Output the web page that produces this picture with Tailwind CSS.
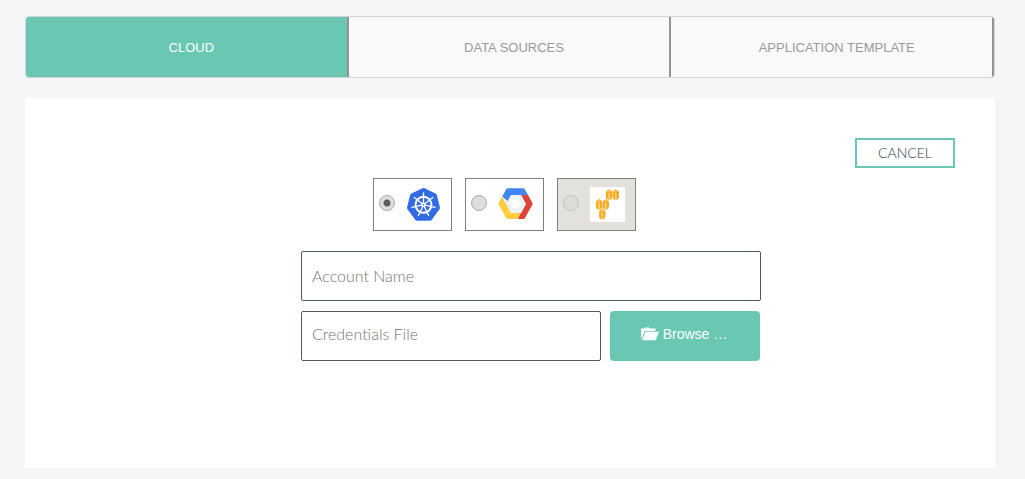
<!DOCTYPE html>
<html lang="en">
<head>
<meta charset="utf-8">
<meta name="viewport" content="width=device-width, initial-scale=1">
<title>Cloud accounts</title>
<script src="https://cdn.jsdelivr.net/npm/@tailwindcss/browser@4"></script>
</head>
<body class="min-h-screen bg-[#f4f6f8] pt-4 pr-[30px] pb-[11px] pl-[25px] font-['Liberation_Sans',Arial,sans-serif]">
<nav class="mb-5 flex overflow-hidden rounded border border-[#d3d3d3] bg-[#f9f9f9] text-[13px] text-[#999]">
  <button type="button" class="h-15 flex-1 border-r-2 border-[#999191] bg-[#69c7b4] pt-0.5 pl-[10px] text-white">CLOUD</button>
  <button type="button" class="h-15 flex-1 border-r-2 border-[#999191] pt-0.5 pl-[10px]">DATA SOURCES</button>
  <button type="button" class="h-15 flex-1 border-r-2 border-[#999191] pt-0.5 pl-[10px]">APPLICATION TEMPLATE</button>
</nav>
<main class="min-h-[370px] bg-white px-10 pt-10 pb-[107px]">
  <div class="mb-[10px] flex justify-end">
    <button type="button" class="h-[30px] w-[100px] border-2 border-[#69c7b4] font-['Lato',sans-serif] text-sm font-light text-[#2c3e50]">CANCEL</button>
  </div>
  <form>
    <div class="mb-5 flex justify-center gap-[13px] pr-[11px]">
      <label class="flex h-[53px] w-[79px] items-center gap-[11px] border border-[#808080] pl-[5px]">
        <input type="radio" name="provider" checked aria-label="Kubernetes" class="mb-[3px] size-4 shrink-0 appearance-none rounded-full border border-[#a9a9a9] bg-[radial-gradient(circle,#5e5e5e_3px,#dedede_4px)]">
        <svg class="size-[35px] shrink-0" viewBox="0 0 35 35" aria-hidden="true">
          <path d="M16.400 1.300q1.100-.5 2.200 0l10.900 5.300q1.200.6 1.500 1.900l2.900 11.800q.2 1.200-.6 2.200l-7.500 10.200q-.8 1-2.100 1H11.300q-1.300 0-2.100-1L1.700 22.500q-.8-1-.6-2.200L4 8.500q.3-1.300 1.500-1.900z" fill="#326ce5"/>
          <g fill="none" stroke="#fff" stroke-linecap="round">
            <circle cx="17.500" cy="17.800" r="8" stroke-width="2"/>
            <g stroke-width="1.300">
              <path id="spoke" d="M17.500 16V6"/>
              <use href="#spoke" transform="rotate(51.430 17.500 17.800)"/>
              <use href="#spoke" transform="rotate(102.860 17.500 17.800)"/>
              <use href="#spoke" transform="rotate(154.290 17.500 17.800)"/>
              <use href="#spoke" transform="rotate(205.710 17.500 17.800)"/>
              <use href="#spoke" transform="rotate(257.140 17.500 17.800)"/>
              <use href="#spoke" transform="rotate(308.570 17.500 17.800)"/>
            </g>
          </g>
          <circle cx="17.500" cy="17.800" r="2.300" fill="#fff"/>
          <circle cx="17.500" cy="17.800" r=".8" fill="#326ce5"/>
        </svg>
      </label>
      <label class="flex h-[53px] w-[79px] items-center gap-[11px] border border-[#808080] pl-[5px]">
        <input type="radio" name="provider" aria-label="Google Cloud" class="mb-[3px] size-4 shrink-0 appearance-none rounded-full border border-[#a9a9a9] bg-[#dedede]">
        <svg class="size-[35px] shrink-0" viewBox="0 0 35 35" aria-hidden="true">
          <path d="M12 7.500h11l6 9.500-6 9.500H12L6 17z" fill="#f1f1f1"/>
          <path d="M10 1.300h15q1.200 0 1.800 1L30 8h-17L9.500 14 4.200 9.600l4-7.300q.6-1 1.800-1z" fill="#4285f4"/>
          <path d="M23.300 8H30l4.300 7.700q.6 1 0 2L27 31q-.6 1-1.800 1H20l8-15z" fill="#db4437"/>
          <path d="M4.200 9.600L12.500 26H23l-3 6H10q-1.200 0-1.800-1L.7 17.700q-.6-1 0-2z" fill="#ffcd40"/>
          <path d="M22.800 26L20 32h5z" fill="#db4437"/>
          <circle cx="17.500" cy="17" r="4.500" fill="#fff"/>
        </svg>
      </label>
      <label class="flex h-[53px] w-[79px] items-center gap-[11px] border border-[#808080] bg-[#e3e1dc] pl-[5px]">
        <input type="radio" name="provider" disabled aria-label="Amazon Web Services" class="mb-[3px] size-4 shrink-0 appearance-none rounded-full border border-[#c6c5c1] bg-[#dddbd7]">
        <svg class="size-[35px] shrink-0" viewBox="0 0 35 35" aria-hidden="true">
          <path d="M0 0h35v35H0z" fill="#fff"/>
          <g id="box">
            <path d="M16 4.500l1.300-1L19 2.300l1.700 1.200 1.500 1v6.500l-1.200 1.200-2 .9-2-.9L16 11z" fill="#fba91f"/>
            <path d="M17 4.600l2-1 2.200 1-2.200.9z" fill="#fdc566"/>
            <path d="M18.600 6h.9v6.500h-.9z" fill="#fff0cc"/>
          </g>
          <use href="#box" x="6.800"/>
          <use href="#box" x="-10" y="9.700"/>
          <use href="#box" x="-3.300" y="9.700"/>
          <use href="#box" x="-6.800" y="19.500"/>
        </svg>
      </label>
    </div>
    <div class="flex justify-center pl-[42px]">
      <div class="flex w-full max-w-[460px] flex-col gap-[10px]">
        <input type="text" aria-label="Account Name" placeholder="Account Name" class="h-[50px] w-full rounded-xs border border-[#4b5a66] bg-white px-[10px] pb-0.5 font-['Lato',sans-serif] text-base font-light text-[#444] placeholder:text-[#757575]">
        <div class="flex gap-[9px] pr-px">
          <input type="text" aria-label="Credentials File" placeholder="Credentials File" class="h-[50px] min-w-0 flex-1 rounded-xs border border-[#4b5a66] bg-white px-[10px] pb-1.5 font-['Lato',sans-serif] text-base font-light text-[#444] [font-variant-ligatures:none] placeholder:text-[#757575]">
          <button type="button" class="flex h-[50px] w-[150px] items-center justify-center gap-1 rounded bg-[#69c7b4] pr-0.5 pb-1 text-sm text-white">
            <svg class="h-[14px] w-[18px]" viewBox="0 0 18 14" fill="currentColor" aria-hidden="true"><path d="M0 11.500V1.500h3L3.700.5h4.500l.8 1h5.500V4H3.800L.6 11.500z"/><path d="M4.500 4.800H18l-3.300 8.400H1z"/></svg>
            Browse …
          </button>
        </div>
      </div>
    </div>
  </form>
</main>
</body>
</html>
